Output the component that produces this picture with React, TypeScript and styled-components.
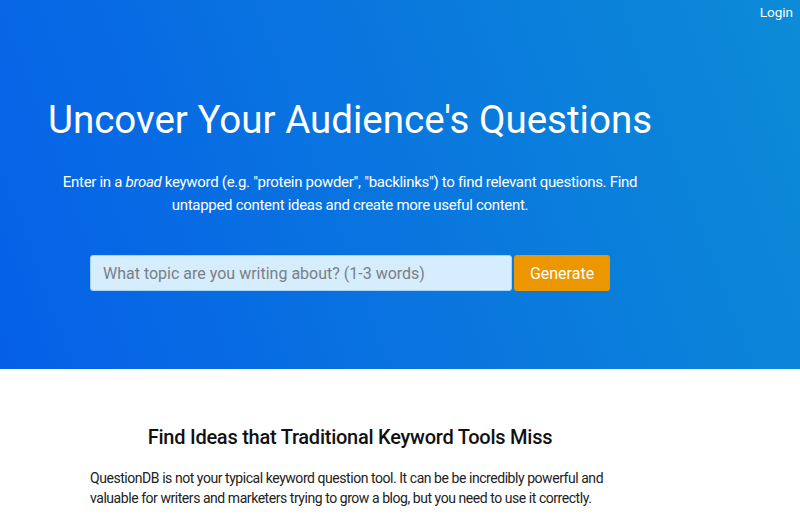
import React from "react";
import styled, { createGlobalStyle } from "styled-components";

const GlobalStyle = createGlobalStyle({
  "*": { boxSizing: "border-box" },
  body: {
    margin: 0,
    fontFamily: "Roboto, 'Liberation Sans', Arial, sans-serif",
    background: "#fff",
    color: "#212529"
  }
});

const Hero = styled.header({
  height: "369px",
  background: "linear-gradient(70deg, #0560e8 0%, #0a78de 55%, #0c8bd6 100%)",
  color: "#fff",
  display: "flex",
  flexDirection: "column"
});

const TopBar = styled.nav({
  display: "flex",
  justifyContent: "flex-end",
  padding: "3px 7px 0 0"
});

const NavLink = styled.a({
  color: "#fff",
  fontSize: "13.5px",
  textDecoration: "none",
  lineHeight: "18px"
});

const Wrapper = styled.div({
  width: "700px",
  display: "flex",
  flexDirection: "column",
  alignItems: "center"
});

const Title = styled.h1({
  margin: "76px 0 0",
  fontSize: "38.5px",
  fontWeight: 400,
  lineHeight: "46px"
});

const Lead = styled.p({
  margin: "28px 0 0",
  width: "620px",
  textAlign: "center",
  fontSize: "15px",
  lineHeight: "23px",
  letterSpacing: "-0.3px"
});

const SearchForm = styled.form({
  display: "flex",
  gap: "2px",
  marginTop: "38px",
  width: "520px"
});

const SearchInput = styled.input({
  flex: 1,
  height: "36px",
  border: "1px solid #a9d4f7",
  borderRadius: "3px",
  background: "#d6edfd",
  padding: "0 12px",
  fontFamily: "inherit",
  fontSize: "16px",
  color: "#333",
  outline: "none",
  "&::placeholder": { color: "#7a7f85" }
});

const GenerateButton = styled.button({
  width: "96px",
  height: "36px",
  border: "none",
  borderRadius: "3px",
  background: "#ec9600",
  color: "#fff",
  fontFamily: "inherit",
  fontSize: "16px",
  cursor: "pointer"
});

const Section = styled.section({
  width: "700px",
  display: "flex",
  flexDirection: "column",
  alignItems: "center",
  paddingTop: "56px"
});

const SectionTitle = styled.h2({
  margin: 0,
  fontSize: "20px",
  fontWeight: 500,
  lineHeight: "24px",
  letterSpacing: "-0.25px",
  color: "#111"
});

const Body = styled.p({
  margin: "19px 0 0",
  width: "520px",
  fontSize: "14px",
  lineHeight: "20px",
  letterSpacing: "-0.45px",
  color: "#222"
});

export default function App() {
  return (
    <>
      <GlobalStyle />
      <Hero>
        <TopBar>
          <NavLink href="#">Login</NavLink>
        </TopBar>
        <Wrapper>
          <Title>Uncover Your Audience's Questions</Title>
          <Lead>
            Enter in a <em>broad</em> keyword (e.g. "protein powder", "backlinks") to find
            relevant questions. Find untapped content ideas and create more useful content.
          </Lead>
          <SearchForm onSubmit={e => e.preventDefault()}>
            <SearchInput placeholder="What topic are you writing about? (1-3 words)" />
            <GenerateButton type="submit">Generate</GenerateButton>
          </SearchForm>
        </Wrapper>
      </Hero>
      <Section>
        <SectionTitle>Find Ideas that Traditional Keyword Tools Miss</SectionTitle>
        <Body>
          QuestionDB is not your typical keyword question tool. It can be be incredibly
          powerful and valuable for writers and marketers trying to grow a blog, but you need
          to use it correctly.
        </Body>
      </Section>
    </>
  );
}
